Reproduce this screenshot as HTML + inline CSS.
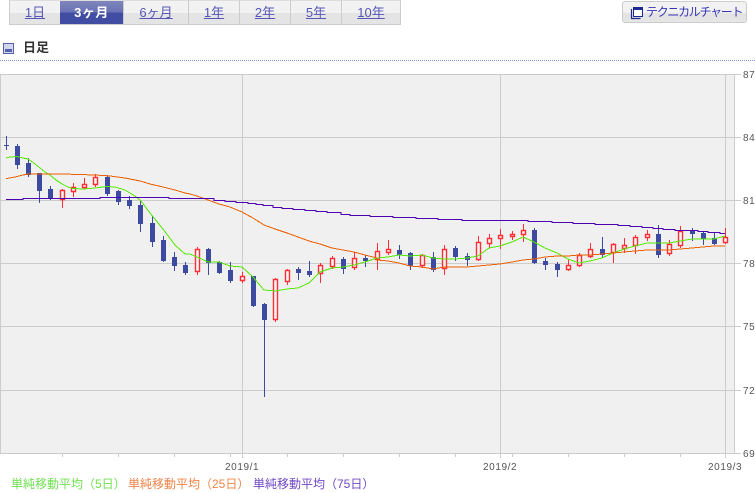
<!DOCTYPE html>
<html lang="ja">
<head>
<meta charset="utf-8">
<style>
html,body{margin:0;padding:0;background:#fff}
body{width:755px;height:493px;position:relative;overflow:hidden;font-family:"Liberation Sans","Noto Sans CJK JP",sans-serif}
.tab{position:absolute;top:0;height:23px;border:1px solid #ccc;border-top:1px solid #ddd;border-left:0;box-sizing:content-box;background:linear-gradient(#f2f2f2 0,#f2f2f2 12px,#e4e4e4 12px,#e4e4e4 100%);text-align:center;font-size:13px;line-height:24px;color:#5656b8;text-decoration:underline}
.tab.on{background:linear-gradient(#7f86bd 0,#6a72b4 11px,#404da2 12px,#404da2 100%);color:#fff;font-weight:bold;text-decoration:none;letter-spacing:.5px}
.btn{position:absolute;left:622px;top:1px;width:123px;height:20px;border:1px solid #ccc;border-radius:3px;background:linear-gradient(#f2f2f2 0,#f2f2f2 10px,#e2e2e2 12px,#e6e6e6 100%);font-size:12px;line-height:21px;color:#3535b5;white-space:nowrap}
.btn span{position:absolute;left:23px;top:0;letter-spacing:-1.3px}
.h{position:absolute;left:23px;top:40px;font-size:13px;font-weight:bold;color:#333;line-height:16px}
.dots{position:absolute;left:0;top:60px;width:755px;border-top:1px dotted #7f8fd0}
.lg{position:absolute;top:477px;font-size:12px;line-height:14px;white-space:nowrap}
svg{position:absolute;left:0;top:0}
text{font-family:"Liberation Sans",sans-serif;font-size:10px;fill:#555;letter-spacing:.6px}
</style>
</head>
<body>
<div class="tab" style="left:9px;width:50px;border-left:1px solid #ccc">1日</div>
<div class="tab on" style="left:60px;width:63px">3ヶ月</div>
<div class="tab" style="left:124px;width:64px">6ヶ月</div>
<div class="tab" style="left:189px;width:50px">1年</div>
<div class="tab" style="left:240px;width:50px">2年</div>
<div class="tab" style="left:291px;width:50px">5年</div>
<div class="tab" style="left:342px;width:58px">10年</div>
<div class="btn"><svg width="14" height="14" style="left:7px;top:4px" viewBox="0 0 14 14"><path d="M1.5 3v9.5h9" fill="none" stroke="#1a2a90" stroke-width="1.2"/><rect x="3.5" y="1.5" width="9" height="9" fill="#fff" stroke="#1a2a90"/><rect x="3" y="1" width="10" height="3" fill="#1a2a90"/></svg><span>テクニカルチャート</span></div>
<svg width="14" height="12" style="left:3px;top:43px" viewBox="0 0 14 12"><rect x=".5" y=".5" width="10" height="10" fill="#d4d7ec" stroke="#5560b0"/><rect x="2" y="6" width="7" height="3" fill="#5560b0"/></svg>
<div class="h">日足</div>
<div class="dots"></div>
<svg width="755" height="493" viewBox="0 0 755 493">
<g shape-rendering="crispEdges">
<rect x="0" y="74" width="735" height="379" fill="#f0f0f0"/>
<path fill="none" stroke="#ccc" d="M0 74.5H741M0 137.5H741M0 200.5H741M0 263.5H741M0 326.5H741M0 390.5H741M0 453.5H741M.5 74V453M734.5 74V453M242.5 74V458M500.5 74V458M725.5 74V458M62.5 453V457M118.5 453V457M174.5 453V457M230.5 453V457M287.5 453V457M343.5 453V457M399.5 453V457M455.5 453V457M512.5 453V457M568.5 453V457M624.5 453V457M680.5 453V457"/>
<path fill="none" stroke="#ff2e35" d="M62.5 189V208M73.5 183V197M84.5 178V189M95.5 174V187M197.5 247V275M242.5 272V283M275.5 278V322M287.5 269V285M320.5 263V283M332.5 256V269M354.5 252V270M377.5 243V270M388.5 240V255M422.5 254V268M444.5 245V275M478.5 236V261M489.5 234V248M500.5 229V249M512.5 231V240M523.5 224V242M568.5 260V271M579.5 253V267M590.5 243V258M613.5 243V263M624.5 238V253M635.5 235V254M647.5 230V241M669.5 240V256M680.5 226V248M725.5 228V244"/>
</g>
<path fill="#f6f6f6" stroke="#ff2e35" stroke-width="1.4" d="M60.5 190.5h4v9h-4zM71.5 187.5h4v4h-4zM82.5 184.5h4v3h-4zM93.5 177.5h4v7h-4zM195.5 249.5h4v22h-4zM240.5 276.5h4v4h-4zM273.5 279.5h4v40h-4zM285.5 270.5h4v11h-4zM318.5 265.5h4v8h-4zM330.5 258.5h4v8h-4zM352.5 258.5h4v9h-4zM375.5 251.5h4v8h-4zM386.5 249.5h4v3h-4zM420.5 255.5h4v10h-4zM442.5 249.5h4v19h-4zM476.5 242.5h4v17h-4zM487.5 238.5h4v5h-4zM498.5 235.5h4v3h-4zM510.5 234.5h4v2h-4zM521.5 230.5h4v4h-4zM566.5 265.5h4v4h-4zM577.5 255.5h4v10h-4zM588.5 249.5h4v7h-4zM611.5 244.5h4v8h-4zM622.5 245.5h4v3h-4zM633.5 237.5h4v8h-4zM645.5 234.5h4v3h-4zM667.5 244.5h4v9h-4zM678.5 231.5h4v14h-4zM723.5 237.5h4v5h-4z"/>
<g shape-rendering="crispEdges">
<path fill="none" stroke="#3c4ba0" d="M6.5 136V150M17.5 144V169M28.5 158V177M39.5 173V203M50.5 186V200M107.5 175V196M118.5 190V205M129.5 196V209M140.5 200V232M152.5 216V247M163.5 236V262M174.5 252V271M185.5 262V275M208.5 248V275M219.5 261V274M230.5 262V283M253.5 276V307M264.5 303V397M298.5 267V280M309.5 261V277M343.5 257V274M365.5 255V267M399.5 245V259M410.5 252V270M433.5 252V272M455.5 246V261M467.5 253V266M534.5 228V264M545.5 258V270M557.5 262V277M602.5 237V258M658.5 225V258M692.5 228V241M703.5 231V245M714.5 232V245"/>
<path fill="#3c4ba0" d="M4 145h5v1h-5zM15 146h5v19h-5zM26 163h5v12h-5zM37 173h5v18h-5zM48 189h5v10h-5zM105 177h5v17h-5zM116 191h5v11h-5zM127 200h5v6h-5zM138 205h5v19h-5zM150 223h5v19h-5zM161 240h5v21h-5zM172 257h5v9h-5zM183 265h5v8h-5zM206 249h5v14h-5zM217 262h5v11h-5zM228 270h5v11h-5zM251 276h5v30h-5zM262 304h5v16h-5zM296 269h5v4h-5zM307 271h5v4h-5zM341 259h5v10h-5zM363 258h5v3h-5zM397 250h5v5h-5zM408 253h5v13h-5zM431 257h5v13h-5zM453 248h5v9h-5zM465 256h5v4h-5zM532 230h5v33h-5zM543 261h5v4h-5zM555 264h5v6h-5zM600 249h5v6h-5zM656 234h5v21h-5zM690 231h5v3h-5zM701 233h5v6h-5zM712 238h5v6h-5z"/>
<polyline fill="none" stroke="#55e800" points="6,158 10,157 17,156.5 23,158 28,159 35,164 40,168 45,172 50,175 56,180 62,184 68,187 73,188.5 84,189 95,188 107,186.5 115,187 125,190 135,196 141,201 150,213 163,229 175,245 185,254 190,254 197,257 208,262 219,262 230,266 242,267 253,277 264,290 275,291 287,289 298,288 309,283 320,272 332,268 343,267 354,265 365,262 377,258 388,257 399,255 410,256 422,255 433,258 444,259 455,259 467,258 478,256 489,248 500,246 512,242 523,237 534,242 545,248 557,253 568,259 579,263 590,261 602,258 613,253 624,249 635,246 647,243 658,243 669,243 680,241 692,239 703,239 714,239 725,236"/>
<polyline fill="none" stroke="#ec5f00" points="6,178.5 10,178 17,176.5 23,175 28,174 40,174 62,174 79,174.5 95,175 110,176 125,178 140,181 150,184 163,187 175,190 185,193 190,194 197,196 208,200 219,204 230,207 242,212 253,218 264,225 275,229 287,233 298,237 309,241 320,244 332,248 343,250 354,252 365,255 377,258 377,260 388,261 399,263 410,266 422,267 433,269 444,267 467,267 478,266 489,265 500,264 512,262 523,260 534,259 545,257 557,256 568,256 579,255 590,255 602,254 613,253 624,252 635,251 647,250 669,250 680,249 692,248 703,247 714,246 725,246"/>
<path fill="none" stroke="#4c00b4" d="M6 199.5H23V198.5H100V197.5H169V198.5H214V199.5H214H214V200.5H225V201.5H236V202.5H248V203.5H256V204.5H263V205.5H273V207.5H282V208.5H293V209.5H305V210.5H316V211.5H327V212.5H341V214.5H350V215.5H370V216.5H393V217.5H416V218.5H438V219.5H462V220.5H528V221.5H552V222.5H573V223.5H595V224.5H618V225.5H630V226.5H642V227.5H653V228.5H663V229.5H675V230.5H698V231.5H708V232.5H720V233.5H725"/>
</g>
<text x="743" y="78">87</text>
<text x="743" y="141">84</text>
<text x="743" y="204">81</text>
<text x="743" y="267">78</text>
<text x="743" y="330">75</text>
<text x="743" y="394">72</text>
<text x="743" y="457">69</text>
<text x="225" y="470">2019/1</text>
<text x="483" y="470">2019/2</text>
<text x="708" y="470">2019/3</text>
</svg>
<div class="lg" style="left:11px;color:#70e050">単純移動平均（5日）</div>
<div class="lg" style="left:128px;color:#f08448">単純移動平均（25日）</div>
<div class="lg" style="left:253px;color:#7048c4">単純移動平均（75日）</div>
</body>
</html>
